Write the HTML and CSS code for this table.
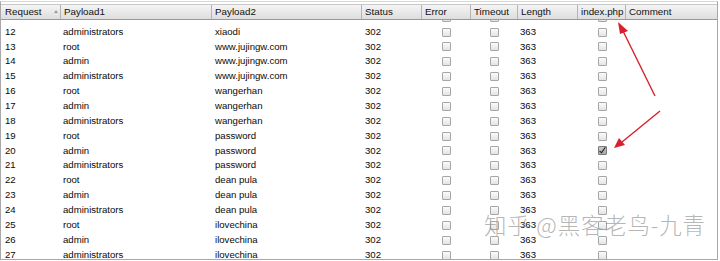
FILE: index.html
```html
<!DOCTYPE html>
<html>
<head>
<meta charset="utf-8">
<link rel="stylesheet" href="styles.css">
</head>
<body>
<div class="table">
  <div class="head">
    <div class="hc sorted">Request<span class="sort"></span></div>
    <div class="hc">Payload1</div>
    <div class="hc">Payload2</div>
    <div class="hc">Status</div>
    <div class="hc">Error</div>
    <div class="hc">Timeout</div>
    <div class="hc">Length</div>
    <div class="hc">index.php</div>
    <div class="hc last">Comment</div>
  </div>
  <div class="body">
    <div class="rows" id="rows"></div>
  </div>
  <svg class="arrows" width="720" height="261" viewBox="0 0 720 261">
    <line x1="655" y1="96" x2="623" y2="31" stroke="#d8202e" stroke-width="1.4"/>
    <polygon points="618,22 628,31 620,34" fill="#d8202e"/>
    <line x1="660" y1="111" x2="622" y2="142" stroke="#d8202e" stroke-width="1.4"/>
    <polygon points="614,148 619,138 625,145" fill="#d8202e"/>
  </svg>
  <div class="watermark">知乎 @黑客老鸟-九青</div>
</div>
<script>
const data = [
 [11,"",""],
 [12,"administrators","xiaodi"],
 [13,"root","www.jujingw.com"],
 [14,"admin","www.jujingw.com"],
 [15,"administrators","www.jujingw.com"],
 [16,"root","wangerhan"],
 [17,"admin","wangerhan"],
 [18,"administrators","wangerhan"],
 [19,"root","password"],
 [20,"admin","password"],
 [21,"administrators","password"],
 [22,"root","dean pula"],
 [23,"admin","dean pula"],
 [24,"administrators","dean pula"],
 [25,"root","ilovechina"],
 [26,"admin","ilovechina"],
 [27,"administrators","ilovechina"]
];
const rows = document.getElementById('rows');
for (const [n,p1,p2] of data) {
  const r = document.createElement('div');
  r.className = 'row';
  const hidden = n===11;
  const chk = n===20 ? 'cb checked' : 'cb';
  r.innerHTML = `<div class="c">${hidden?'':n}</div><div class="c">${p1}</div><div class="c">${p2}</div><div class="c">${hidden?'':'302'}</div><div class="c ctr"><span class="cb"></span></div><div class="c ctr"><span class="cb"></span></div><div class="c">${hidden?'':'363'}</div><div class="c ctr"><span class="${chk}"></span></div><div class="c"></div>`;
  rows.appendChild(r);
}
</script>
</body>
</html>
```
FILE: styles.css
```css
html, body { margin: 0; padding: 0; background: #fff; }
body { width: 720px; height: 261px; overflow: hidden; font-family: "Liberation Sans", Arial, sans-serif; color: #111; }
.table {
  position: relative;
  width: 718px;
  height: 259px;
  margin-top: 1px;
  border: 1px solid #a8a8a8;
  border-top-color: #d8d8d8;
  box-sizing: border-box;
  overflow: hidden;
  background: #fff;
}
.head, .row {
  display: grid;
  grid-template-columns: 60px 151px 150px 60px 49px 47px 60px 48px 1fr;
}
.head {
  margin-top: 2px;
  height: 16px;
  background: linear-gradient(#f4f4f4, #dedede);
  border-top: 1px solid #c8c8c8;
  border-bottom: 1px solid #9a9a9a;
  box-sizing: border-box;
  position: relative;
  z-index: 2;
}
.hc {
  font-size: 9.8px;
  line-height: 13px;
  padding-left: 3px;
  border-right: 1px solid #b4b4b4;
  color: #111;
  position: relative;
}
.hc.sorted { padding-left: 4px; }
.hc.last { border-right: none; }
.sort {
  position: absolute;
  right: 2px;
  top: 5px;
  width: 0; height: 0;
  border-left: 2px solid transparent;
  border-right: 2px solid transparent;
  border-bottom: 3px solid #9a9a9a;
}
.body { height: 239px; overflow: hidden; }
.rows { margin-top: -10.2px; }
.row { height: 14.87px; }
.c {
  font-size: 9.6px;
  line-height: 14.87px;
  padding-left: 3px;
  white-space: nowrap;
  color: #0a0a0a;
}
.row .c:first-child { padding-left: 4px; }
.row .c:nth-child(2) { padding-left: 2px; }
.row .c:nth-child(7) { padding-left: 2px; }
.ctr { display: flex; align-items: center; justify-content: center; padding-left: 0; }
.cb {
  display: inline-block;
  width: 7px; height: 7px;
  border: 1px solid #a6a6a6;
  border-radius: 1px;
  background: linear-gradient(#fbfbfb, #e4e4e4);
  position: relative;
}
.cb.checked { background: linear-gradient(#c8c8c8, #a8a8a8); border-color: #7a7a7a; }
.cb.checked::after {
  content: "";
  position: absolute;
  left: 2px; top: -1px;
  width: 2px; height: 6px;
  border-right: 1.5px solid #111;
  border-bottom: 1px solid #111;
  transform: rotate(35deg);
}
.arrows { position: absolute; left: -1px; top: -2px; z-index: 3; pointer-events: none; }
.watermark {
  position: absolute;
  left: 483px;
  top: 206px;
  z-index: 4;
  font-family: "Noto Sans CJK SC", "Noto Sans", sans-serif;
  font-weight: 300;
  font-size: 22.5px;
  color: rgba(150,150,150,0.7);
  letter-spacing: 0.8px;
  white-space: nowrap;
}
```
